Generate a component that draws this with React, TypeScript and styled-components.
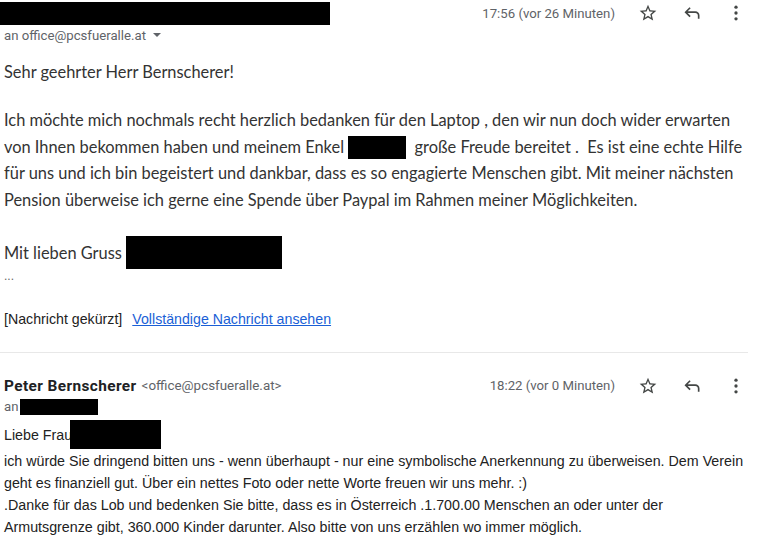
import React from 'react'
import styled, { createGlobalStyle } from 'styled-components'

const GlobalStyle = createGlobalStyle`
body{
  margin:0;
  background:#fff;
  font-family:Roboto, "Liberation Sans", Arial, sans-serif;
}
`
const Page = styled.div`
width:761px;
height:541px;
overflow:hidden;
display:flex;
flex-direction:column;
`
const Message = styled.div`
display:flex;
flex-direction:column;
`
const HeaderRow = styled.div<{ $h: number }>`
display:flex;
align-items:center;
height:${p => p.$h}px;
padding-right:3px;
`
const Sender = styled.div`
flex:1;
display:flex;
align-items:center;
padding-left:4px;
white-space:nowrap;
`
const SenderName = styled.span`
font-size:15.4px;
font-weight:700;
letter-spacing:0.4px;
color:#202124;
`
const SenderMail = styled.span`
font-size:13.4px;
color:#5f6368;
margin-left:5px;
`
const Redacted = styled.span<{ $w: number; $h: number; $ml?: number }>`
display:inline-block;
width:${p => p.$w}px;
height:${p => p.$h}px;
background:#000;
margin-left:${p => p.$ml || 0}px;
vertical-align:middle;
flex-shrink:0;
`
const Time = styled.span`
font-size:13.2px;
color:#5f6368;
margin-right:11px;
white-space:nowrap;
`
const IconButton = styled.span`
width:44px;
height:26px;
display:flex;
align-items:center;
justify-content:center;
color:#444746;
`
const ToLine = styled.div`
display:flex;
align-items:center;
padding-left:4px;
font-size:13.2px;
color:#5f6368;
height:16px;
`
const Caret = styled.span`
display:inline-block;
width:0;
height:0;
border-left:4px solid transparent;
border-right:4px solid transparent;
border-top:4px solid #5f6368;
margin-left:7px;
`
const Body = styled.div`
padding-left:4px;
font-family:Lato, "Open Sans", sans-serif;
font-size:16.4px;
color:#333;
`
const Line = styled.div<{ $lh: number }>`
line-height:${p => p.$lh}px;
height:${p => p.$lh}px;
white-space:nowrap;
display:flex;
align-items:center;
`
const Dots = styled.div`
font-family:"Liberation Sans", Arial, sans-serif;
font-size:12px;
color:#666;
line-height:10px;
height:14px;
`
const Trimmed = styled.div`
font-family:"Liberation Sans", Arial, sans-serif;
font-size:14.2px;
color:#222;
padding-left:4px;
height:18px;
line-height:18px;
`
const Link = styled.a`
color:#1a5fd6;
text-decoration:underline;
margin-left:10px;
`
const Divider = styled.div`
height:1px;
background:#e8e8e8;
width:748px;
`
const Body2 = styled.div`
padding-left:4px;
font-family:"Liberation Sans", Arial, sans-serif;
font-size:14.27px;
color:#222;
`

const Star = () => (
  <svg width="20" height="20" viewBox="0 0 24 24" fill="currentColor">
    <path d="M22 9.24l-7.19-.62L12 2 9.19 8.63 2 9.24l5.46 4.73L5.82 21 12 17.27 18.18 21l-1.630-7.03L22 9.24zM12 15.4l-3.76 2.27 1-4.28-3.32-2.88 4.38-.38L12 6.1l1.71 4.04 4.38.38-3.32 2.88 1 4.28L12 15.4z" />
  </svg>
)
const Reply = () => (
  <svg width="20" height="20" viewBox="0 0 24 24" fill="currentColor">
    <path d="M19 19v-4q0-1.25-.875-2.125T16 12H6.825l3.6 3.6L9 17l-6-6 6-6 1.425 1.4-3.6 3.6H16q2.075 0 3.538 1.463T21 15v4h-2Z" />
  </svg>
)
const More = () => (
  <svg width="20" height="20" viewBox="0 0 24 24" fill="currentColor">
    <circle cx="12" cy="5" r="2" />
    <circle cx="12" cy="12" r="2" />
    <circle cx="12" cy="19" r="2" />
  </svg>
)

function Actions({ time }: { time: string }) {
  return (
    <>
      <Time>{time}</Time>
      <IconButton><Star /></IconButton>
      <IconButton><Reply /></IconButton>
      <IconButton><More /></IconButton>
    </>
  )
}

export default function App() {
  return (
    <Page>
      <GlobalStyle />
      <Message>
        <HeaderRow $h={26}>
          <div style={{ flex: 1, display: 'flex' }}>
            <Redacted $w={330} $h={23} style={{ alignSelf: 'flex-start' }} />
          </div>
          <Actions time="17:56 (vor 26 Minuten)" />
        </HeaderRow>
        <ToLine style={{ marginTop: 1 }}>an office@pcsfueralle.at<Caret /></ToLine>
        <Body style={{ marginTop: 15 }}>
          <Line $lh={27}>Sehr geehrter Herr Bernscherer!</Line>
          <div style={{ height: 22 }} />
          <Line $lh={26.7}>Ich möchte mich nochmals recht herzlich bedanken für den Laptop , den wir nun doch wider erwarten</Line>
          <Line $lh={26.7}>von Ihnen bekommen haben und meinem Enkel&nbsp;<Redacted $w={58} $h={23} />&nbsp;&nbsp;große Freude bereitet .&nbsp; Es ist eine echte Hilfe</Line>
          <Line $lh={26.7}>für uns und ich bin begeistert und dankbar, dass es so engagierte Menschen gibt. Mit meiner nächsten</Line>
          <Line $lh={26.7}>Pension überweise ich gerne eine Spende über Paypal im Rahmen meiner Möglichkeiten.</Line>
          <div style={{ height: 22 }} />
          <Line $lh={33}>Mit lieben Gruss&nbsp;<Redacted $w={156} $h={33} /></Line>
          <Dots style={{ marginTop: 2 }}>...</Dots>
        </Body>
        <div style={{ height: 25 }} />
        <Trimmed>[Nachricht gekürzt]<Link href="#">Vollständige Nachricht ansehen</Link></Trimmed>
      </Message>
      <div style={{ height: 24 }} />
      <Divider />
      <Message style={{ marginTop: 20 }}>
        <HeaderRow $h={26}>
          <Sender>
            <SenderName>Peter Bernscherer</SenderName>
            <SenderMail>&lt;office@pcsfueralle.at&gt;</SenderMail>
          </Sender>
          <Actions time="18:22 (vor 0 Minuten)" />
        </HeaderRow>
        <ToLine>an<Redacted $w={78} $h={16} $ml={2} /></ToLine>
        <Body2 style={{ marginTop: 5 }}>
          <Line $lh={30}>Liebe Frau<Redacted $w={91} $h={29} $ml={-2} /></Line>
          <Line $lh={22}>ich würde Sie dringend bitten uns - wenn überhaupt - nur eine symbolische Anerkennung zu überweisen. Dem Verein</Line>
          <Line $lh={22}>geht es finanziell gut. Über ein nettes Foto oder nette Worte freuen wir uns mehr. :)</Line>
          <Line $lh={22}>.Danke für das Lob und bedenken Sie bitte, dass es in Österreich .1.700.00 Menschen an oder unter der</Line>
          <Line $lh={22}>Armutsgrenze gibt, 360.000 Kinder darunter. Also bitte von uns erzählen wo immer möglich.</Line>
        </Body2>
      </Message>
    </Page>
  )
}
